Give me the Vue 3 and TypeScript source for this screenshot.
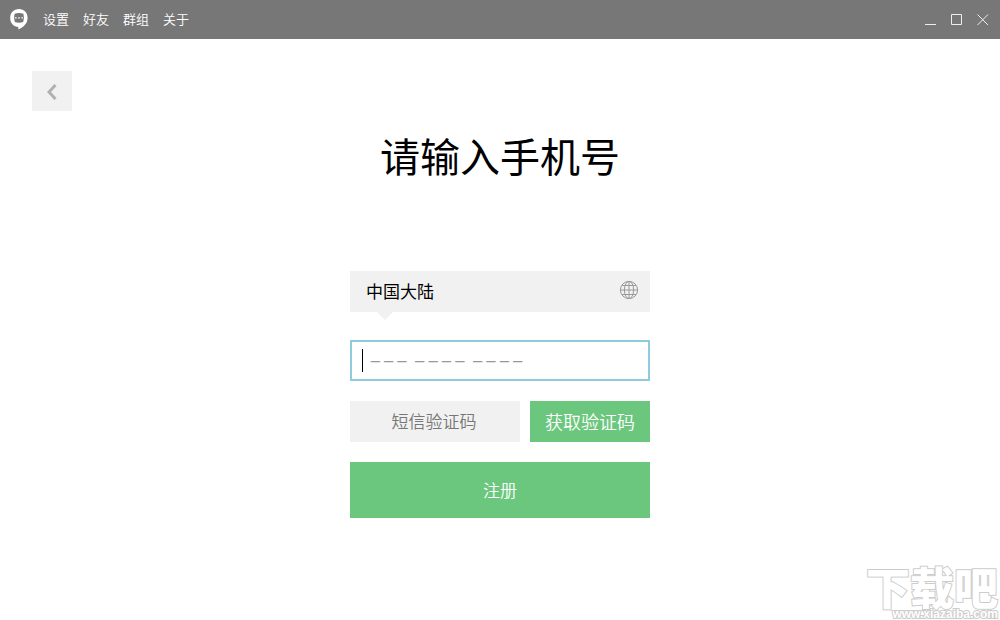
<script setup lang="ts">
import { ref } from 'vue'

const menus: string[] = ['设置', '好友', '群组', '关于']
const regions: string[] = ['中国大陆', '中国香港', '中国台湾']
const region = ref<string>('中国大陆')
const phone = ref<string>('')
const code = ref<string>('')
</script>

<template>
  <div class="window">
    <header class="titlebar">
      <svg class="logo" width="18" height="21" viewBox="0 0 18 21" aria-hidden="true">
        <path d="M9 0C3.800 0 .2 3.700 .2 9s3.600 8.900 8.100 9L8.300 20.500C12.500 18.500 17.600 15.500 17.600 8.800 17.600 3.500 14 0 9 0Z" fill="#fff" />
        <path d="M4.600 4.800Q9 3.400 13.400 4.800Q14.500 9 13.200 13Q9 14.600 4.800 13Q3.500 9 4.600 4.800Z" fill="#777" />
        <path d="M5 8.200h1.600v1.400H5zM8.200 8.200h1.600v1.400H8.200zM11.400 8.200H13v1.400h-1.600z" fill="#fff" />
      </svg>
      <nav class="menu">
        <button v-for="item in menus" :key="item" type="button">{{ item }}</button>
      </nav>
      <div class="controls">
        <button type="button" aria-label="最小化">
          <svg width="12" height="12" viewBox="0 0 12 12"><path d="M0 10.500h11" /></svg>
        </button>
        <button type="button" aria-label="最大化">
          <svg width="12" height="12" viewBox="0 0 12 12"><path d="M.5 .5h10v10H.5z" /></svg>
        </button>
        <button type="button" aria-label="关闭">
          <svg width="12" height="12" viewBox="0 0 12 12"><path d="M.5 .5l10.500 10.500M11 .5L.5 11" /></svg>
        </button>
      </div>
    </header>

    <main class="content">
      <button class="back" type="button" aria-label="返回">
        <svg width="10" height="18" viewBox="0 0 10 18"><path d="M8.500 3L2 10l6.500 7" /></svg>
      </button>

      <form class="form" @submit.prevent>
        <h1>请输入手机号</h1>

        <div class="region">
          <select v-model="region" aria-label="国家或地区">
            <option v-for="r in regions" :key="r">{{ r }}</option>
          </select>
          <svg class="globe" width="20" height="20" viewBox="0 0 20 20" aria-hidden="true">
            <circle cx="10" cy="10" r="8.600" />
            <ellipse cx="10" cy="10" rx="4.600" ry="8.600" />
            <path d="M10 1.400v17.200M1.400 10h17.200M3 5.500h14M3 14.500h14" />
          </svg>
        </div>

        <div class="phone">
          <input v-model="phone" type="tel" aria-label="手机号" placeholder="  _ _ _  _ _ _ _  _ _ _ _" />
          <span class="caret"></span>
        </div>

        <div class="verify">
          <input v-model="code" type="text" aria-label="短信验证码" placeholder="短信验证码" />
          <button type="button">获取验证码</button>
        </div>

        <button class="submit" type="submit">注册</button>
      </form>
    </main>

    <div class="watermark">
      <span class="mark-name">下载吧</span>
      <span class="mark-url">www.xiazaiba.com</span>
    </div>
  </div>
</template>

<style>
body {
  margin: 0;
  background: #fff;
}
</style>

<style scoped>
.window,
.window button,
.window input,
.window select {
  font-family: "Noto Sans CJK SC", sans-serif;
  font-weight: 350;
}

.window {
  position: relative;
  display: flex;
  flex-direction: column;
  min-height: 100vh;
  overflow: hidden;
  background: #fff;
  color: #000;
}

button,
input,
select {
  box-sizing: border-box;
  margin: 0;
  padding: 0;
  border: 0;
  border-radius: 0;
  outline: 0;
}

button {
  cursor: pointer;
}

.titlebar {
  display: flex;
  align-items: center;
  box-sizing: border-box;
  height: 39px;
  padding: 0 11px 0 10px;
  background: #777;
}

.logo {
  margin-right: 15px;
}

.menu {
  display: flex;
  gap: 14px;
}

.menu button {
  padding-bottom: 2px;
  background: none;
  color: #fff;
  font-size: 13px;
  line-height: 20px;
}

.controls {
  display: flex;
  gap: 14px;
  margin-left: auto;
}

.controls button {
  display: flex;
  background: none;
}

.controls svg {
  fill: none;
  stroke: #eee;
  stroke-width: 1;
}

.content {
  display: grid;
  grid-template-columns: 1fr 300px 1fr;
  align-items: start;
  padding: 32px;
}

.back {
  display: flex;
  align-items: center;
  justify-content: center;
  width: 40px;
  height: 40px;
  background: #f1f1f1;
}

.back svg {
  fill: none;
  stroke: #b0b0b0;
  stroke-width: 3;
}

.form {
  display: flex;
  flex-direction: column;
  padding-top: 54px;
}

.form h1 {
  margin: 0 0 86px;
  font-size: 40px;
  font-weight: 400;
  line-height: 60px;
  text-align: center;
  white-space: nowrap;
}

.region {
  position: relative;
  margin-bottom: 28px;
}

.region::after {
  content: "";
  position: absolute;
  top: 100%;
  left: 27px;
  border: 8px solid transparent;
  border-top-color: #f1f1f1;
  border-bottom: 0;
}

.region select {
  display: block;
  width: 100%;
  height: 41px;
  padding: 0 40px 2px 16px;
  appearance: none;
  background: #f1f1f1;
  color: #000;
  font-size: 17px;
  font-weight: 400;
}

.globe {
  position: absolute;
  top: 9px;
  right: 11px;
  fill: none;
  stroke: #999;
  stroke-width: 1;
  pointer-events: none;
}

.phone {
  position: relative;
  margin-bottom: 20px;
}

.phone input {
  display: block;
  width: 100%;
  height: 41px;
  padding: 0 10px 14px;
  border: 2px solid #8ecbdd;
  background: #fff;
  color: #000;
  caret-color: transparent;
  font-family: "Liberation Sans", "Noto Sans CJK SC", sans-serif;
  font-size: 16px;
}

input::placeholder {
  color: #999;
  opacity: 1;
}

.caret {
  position: absolute;
  top: 9px;
  left: 12px;
  width: 1px;
  height: 23px;
  background: #000;
}

.verify {
  display: flex;
  gap: 10px;
  margin-bottom: 20px;
}

.verify input {
  flex: 1;
  min-width: 0;
  height: 41px;
  padding: 0 2px 2px 0;
  background: #f1f1f1;
  font-size: 17px;
  text-align: center;
}

.verify input::placeholder {
  color: #777;
}

.verify button {
  width: 120px;
  height: 41px;
  padding-bottom: 2px;
  background: #6bc77d;
  color: #fff;
  font-size: 18px;
}

.submit {
  height: 56px;
  padding-bottom: 2px;
  background: #6bc77d;
  color: #fff;
  font-size: 17px;
}

.watermark {
  position: absolute;
  right: 2px;
  bottom: 0;
  display: flex;
  flex-direction: column;
  align-items: flex-end;
  pointer-events: none;
  color: #fff;
}

.mark-name {
  font-size: 44px;
  font-weight: 900;
  line-height: 44px;
  -webkit-text-stroke: 2px #ccc;
  paint-order: stroke fill;
}

.mark-url {
  font-family: "Liberation Sans", sans-serif;
  font-size: 12px;
  font-weight: 700;
  line-height: 12px;
  -webkit-text-stroke: 2px #ccc;
  paint-order: stroke fill;
}
</style>
